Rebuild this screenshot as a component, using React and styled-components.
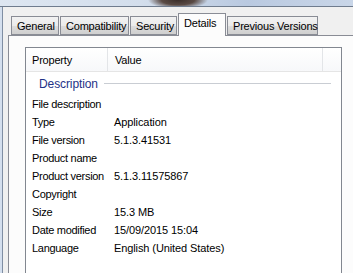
import React from 'react';
import styled, {createGlobalStyle} from 'styled-components';

const Global = createGlobalStyle`
  html, body {
    margin: 0;
    padding: 0;
    background: #f0f0f0;
    overflow: hidden;
  }
  body {
    font-family: "Liberation Sans", Arial, sans-serif;
    font-size: 11px;
    color: #000;
  }
`;

const Window = styled.div`
  width: 353px;
  height: 273px;
  overflow: hidden;
  display: flex;
  flex-direction: column;
  background: #f0f0f0;
`;

const Glass = styled.div`
  height: 6px;
  flex-shrink: 0;
  border-bottom: 1px solid #6f7c8e;
  background:
    radial-gradient(ellipse 30px 9px at 178px 0px, #3a2e2a 0%, #5a4a44 55%, rgba(120,110,110,0) 100%),
    linear-gradient(to right, #dde6f1 0%, #d3deec 40%, #b9c9e0 70%, #c9d6e8 100%);
`;

const Body = styled.div`
  flex: 1;
  display: flex;
  flex-direction: column;
  margin-left: 2px;
  border-left: 1px solid #7f8ea3;
  padding-top: 6px;
  box-shadow: -2px 0 0 #d4dfee;
`;

const TabStrip = styled.div`
  display: flex;
  align-items: flex-end;
  gap: 1px;
  padding-left: 8px;
  height: 22px;
  position: relative;
  z-index: 2;
`;

const Tab = styled.div`
  box-sizing: border-box;
  width: ${p => p.w}px;
  height: ${p => (p.active ? 23 : 19)}px;
  margin-bottom: ${p => (p.active ? -1 : 0)}px;
  border: 1px solid #898c95;
  border-bottom: ${p => (p.active ? 'none' : '1px solid #898c95')};
  background: ${p => (p.active
    ? '#fcfcfc'
    : 'linear-gradient(to bottom, #f2f2f2 0%, #ebebeb 50%, #dddddd 51%, #cfcfcf 100%)')};
  display: flex;
  align-items: ${p => (p.active ? 'flex-start' : 'center')};
  padding-top: ${p => (p.active ? 3 : 0)}px;
  padding-left: 5px;
  white-space: nowrap;
  letter-spacing: -0.2px;
`;

const Panel = styled.div`
  flex: 1;
  margin-left: 5px;
  border: 1px solid #898c95;
  border-right: none;
  background: #fcfcfc;
  padding: 11px 0 0 16px;
`;

const List = styled.div`
  width: 317px;
  height: 240px;
  box-sizing: border-box;
  border: 1px solid #828790;
  background: #fff;
`;

const Header = styled.div`
  display: flex;
  height: 23px;
  border-bottom: 1px solid #e5e5e5;
  background: linear-gradient(to bottom, #ffffff 0%, #f7f8fa 100%);
`;

const HeaderCell = styled.div`
  box-sizing: border-box;
  width: ${p => p.w}px;
  padding-left: ${p => p.pad}px;
  display: flex;
  align-items: center;
  border-right: 1px solid #e3e5e8;
  letter-spacing: -0.2px;
`;

const Group = styled.div`
  display: flex;
  align-items: center;
  height: 21px;
  margin-top: 1px;
  padding-left: 13px;
`;

const GroupTitle = styled.span`
  color: #1e3287;
  font-size: 12px;
  letter-spacing: -0.1px;
  margin-right: 6px;
`;

const GroupLine = styled.div`
  width: 227px;
  height: 1px;
  background: #c9cdd3;
`;

const Rows = styled.div`
  display: flex;
  flex-direction: column;
  padding-top: 1px;
`;

const Row = styled.div`
  display: flex;
  align-items: center;
  height: 18px;
`;

const Label = styled.span`
  width: 82px;
  padding-left: 6px;
  white-space: nowrap;
  letter-spacing: -0.3px;
`;

const Value = styled.span`
  white-space: nowrap;
  letter-spacing: -0.1px;
`;

const tabs = [
  {name: 'General', w: 48},
  {name: 'Compatibility', w: 69},
  {name: 'Security', w: 47},
  {name: 'Details', w: 48, active: true},
  {name: 'Previous Versions', w: 91},
];

const rows = [
  ['File description', ''],
  ['Type', 'Application'],
  ['File version', '5.1.3.41531'],
  ['Product name', ''],
  ['Product version', '5.1.3.11575867'],
  ['Copyright', ''],
  ['Size', '15.3 MB'],
  ['Date modified', '15/09/2015 15:04'],
  ['Language', 'English (United States)'],
];

export default function App() {
  return (
    <Window>
      <Global />
      <Glass />
      <Body>
        <TabStrip>
          {tabs.map(t => (
            <Tab key={t.name} w={t.w} active={t.active}>{t.name}</Tab>
          ))}
        </TabStrip>
        <Panel>
          <List>
            <Header>
              <HeaderCell w={82} pad={6}>Property</HeaderCell>
              <HeaderCell w={215} pad={7}>Value</HeaderCell>
            </Header>
            <Group>
              <GroupTitle>Description</GroupTitle>
              <GroupLine />
            </Group>
            <Rows>
              {rows.map(([k, v]) => (
                <Row key={k}>
                  <Label>{k}</Label>
                  <Value>{v}</Value>
                </Row>
              ))}
            </Rows>
          </List>
        </Panel>
      </Body>
    </Window>
  );
}
